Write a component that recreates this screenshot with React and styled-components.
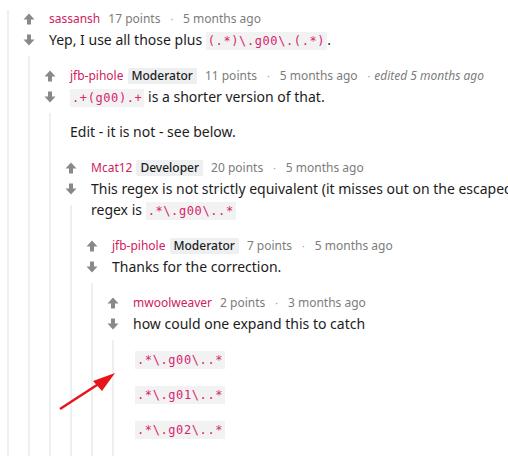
import styled, { createGlobalStyle } from 'styled-components';

const GlobalStyle = createGlobalStyle`
  html, body {
    margin: 0;
    padding: 0;
    background: #ffffff;
    overflow: hidden;
  }
  body {
    font-family: "Noto Sans", "DejaVu Sans", sans-serif;
    color: #1c1c1c;
  }
`;

const Page = styled.div`
  position: relative;
  width: 508px;
  height: 456px;
  overflow: hidden;
  padding-top: 10px;
  box-sizing: border-box;
`;

const Row = styled.div`
  display: flex;
  align-items: stretch;
  padding-top: ${(props) => (props.first ? '0' : '17px')};
  margin-left: ${(props) => (props.shift ? `${props.shift}px` : '0')};
`;

const VoteCol = styled.div`
  width: 21px;
  flex: 0 0 21px;
  display: flex;
  flex-direction: column;
  align-items: center;
`;

const VoteBox = styled.div`
  height: ${(props) => props.h}px;
  margin-top: ${(props) => props.mt || 0}px;
  display: flex;
  align-items: center;
  justify-content: center;
`;

const ThreadLine = styled.div`
  flex: 1;
  width: 2px;
  margin-top: ${(props) => (props.bare ? '0' : '6px')};
  background: #edeff1;
`;

const Main = styled.div`
  flex: 1;
  min-width: 0;
`;

const Head = styled.div`
  padding-left: 10px;
`;

const Meta = styled.div`
  display: flex;
  align-items: center;
  gap: 8px;
  height: 18px;
  font-size: 12px;
  line-height: 18px;
  color: #7c7c7c;
  white-space: nowrap;
`;

const User = styled.span`
  color: #d0215c;
`;

const Badge = styled.span`
  background: #edeff1;
  color: #1c1c1c;
  font-weight: 500;
  padding: 0 4px;
  height: 16px;
  line-height: 16px;
  border-radius: 2px;
  margin-left: -4px;
`;

const Dot = styled.span`
  font-size: 10px;
  color: #9a9a9a;
  padding: 0 2px;
`;

const Edited = styled.span`
  font-style: italic;
  margin-left: -6px;
`;

const Body = styled.div`
  margin-top: 1px;
  display: flex;
  flex-direction: column;
  gap: 14px;
  font-size: 14px;
  line-height: 21px;
`;

const P = styled.p`
  margin: 0;
  height: ${(props) => (props.lines || 1) * 21}px;
  white-space: nowrap;
`;

const Code = styled.code`
  font-family: "DejaVu Sans Mono", "Liberation Mono", monospace;
  font-size: 12px;
  line-height: 1;
  letter-spacing: 0.6px;
  color: #d8246e;
  background: #f2f2f3;
  padding: 2px 2px;
  margin-left: ${(props) => (props.indent ? '2px' : '0')};
`;

const Tail = styled.div`
  height: ${(props) => props.h}px;
`;

const Overlay = styled.svg`
  position: absolute;
  left: 0;
  top: 0;
  pointer-events: none;
`;

const Arrow = ({ down }) => (
  <svg width="12" height="12" viewBox="0 0 12 12" style={down ? { transform: 'rotate(180deg)' } : null}>
    <path d="M6 0.5 L11.5 6.5 H8 V11.5 H4 V6.5 H0.5 Z" fill="#878a8c" />
  </svg>
);

const Comment = ({ first, user, badge, points, time, edited, children, replies, tail }) => (
  <Row first={first}>
    <VoteCol>
      <VoteBox h={18}><Arrow /></VoteBox>
      <VoteBox h={21} mt={1}><Arrow down /></VoteBox>
      <ThreadLine />
    </VoteCol>
    <Main>
      <Head>
        <Meta>
          <User>{user}</User>
          {badge && <Badge>{badge}</Badge>}
          <span>{points}</span>
          <Dot>·</Dot>
          <span>{time}</span>
          {edited && (
            <>
              <Dot>·</Dot>
              <Edited>{edited}</Edited>
            </>
          )}
        </Meta>
        <Body>{children}</Body>
      </Head>
      {replies}
      {tail && <Tail h={tail} />}
    </Main>
  </Row>
);

const App = () => (
  <Page>
    <GlobalStyle />
    <Row first shift={-3}>
      <VoteCol>
        <ThreadLine bare />
      </VoteCol>
      <Main>
        <Comment
          first
          user="sassansh"
          points="17 points"
          time="5 months ago"
          replies={(
            <Comment
              user="jfb-pihole"
              badge="Moderator"
              points="11 points"
              time="5 months ago"
              edited="edited 5 months ago"
              replies={(
                <Comment
                  user="Mcat12"
                  badge="Developer"
                  points="20 points"
                  time="5 months ago"
                  replies={(
                    <Comment
                      user="jfb-pihole"
                      badge="Moderator"
                      points="7 points"
                      time="5 months ago"
                      replies={(
                        <Comment
                          user="mwoolweaver"
                          points="2 points"
                          time="3 months ago"
                          tail={60}
                        >
                          <P>how could one expand this to catch</P>
                          <P><Code indent>.*\.g00\..*</Code></P>
                          <P><Code indent>.*\.g01\..*</Code></P>
                          <P><Code indent>.*\.g02\..*</Code></P>
                        </Comment>
                      )}
                    >
                      <P>Thanks for the correction.</P>
                    </Comment>
                  )}
                >
                  <P lines={2}>
                    This regex is not strictly equivalent (it misses out on the escaped dots). The correct
                    <br />
                    regex is <Code>.*\.g00\..*</Code>
                  </P>
                </Comment>
              )}
            >
              <P><Code>.+(g00).+</Code> is a shorter version of that.</P>
              <P>Edit - it is not - see below.</P>
            </Comment>
          )}
        >
          <P>Yep, I use all those plus <Code>(.*)\.g00\.(.*)</Code>.</P>
        </Comment>
      </Main>
    </Row>
    <Overlay width="508" height="456" viewBox="0 0 508 456">
      <line x1="60" y1="409" x2="100" y2="383" stroke="#e8141c" strokeWidth="2.5" />
      <polygon points="115,373 93,381 102,391" fill="#e8141c" />
    </Overlay>
  </Page>
);

export default App;
